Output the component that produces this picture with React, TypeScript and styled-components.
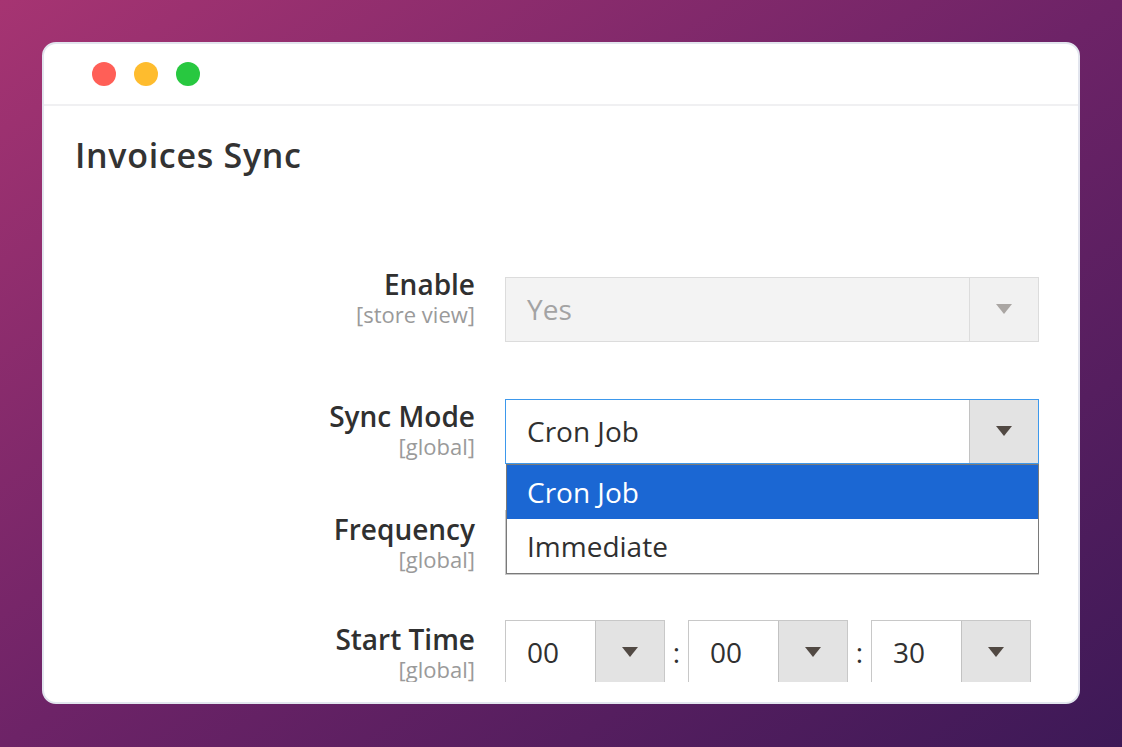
import React from 'react'
import styled, { createGlobalStyle } from 'styled-components'

type SelectState = 'disabled' | 'focus' | 'normal'

const GlobalStyle = createGlobalStyle`
  html, body {
    margin: 0;
    padding: 0;
  }
  body {
    width: 1122px;
    height: 747px;
    overflow: hidden;
    background: linear-gradient(to bottom right, #a63472 0%, #6d2367 50%, #3d1957 100%);
    font-family: 'Open Sans', 'Liberation Sans', sans-serif;
  }
`

const Page = styled.div`
  padding: 42px;
`

const Window = styled.div`
  width: 1038px;
  height: 662px;
  box-sizing: border-box;
  border: 2px solid #e2e5ee;
  border-radius: 14px;
  background: #fff;
  display: flex;
  flex-direction: column;
  overflow: hidden;
`

const TitleBar = styled.div`
  height: 60px;
  flex: none;
  display: flex;
  align-items: center;
  gap: 18px;
  padding-left: 48px;
  border-bottom: 2px solid #f0f0f2;
`

const Dot = styled.span<{ $color: string }>`
  width: 24px;
  height: 24px;
  border-radius: 50%;
  background: ${(p) => p.$color};
`

const Content = styled.div`
  flex: 1;
  min-height: 0;
  overflow: hidden;
  margin-bottom: 20px;
  padding-left: 29px;
`

const Title = styled.h1`
  margin: 29px 0 0 2px;
  font-size: 34px;
  line-height: 1.2;
  font-weight: 600;
  letter-spacing: 0.7px;
  color: #333;
`

const Form = styled.div`
  margin-top: 89px;
`

const Row = styled.div<{ $space: number }>`
  display: grid;
  grid-template-columns: 402px 534px;
  column-gap: 30px;
  align-items: start;
  margin-bottom: ${(p) => p.$space}px;
`

const LabelCell = styled.div`
  text-align: right;
  padding-top: 3px;
`

const Label = styled.div`
  font-size: 28px;
  line-height: 1.2;
  font-weight: 600;
  color: #303030;
`

const Scope = styled.div`
  font-size: 22px;
  line-height: 1.2;
  color: #9a9a9a;
`

const Control = styled.div<{ $offset: number }>`
  position: relative;
  margin-top: ${(p) => p.$offset}px;
`

const SelectBox = styled.div<{ $state: SelectState; $width?: number }>`
  box-sizing: border-box;
  width: ${(p) => (p.$width ? `${p.$width}px` : '100%')};
  height: 65px;
  display: flex;
  border: 1px solid
    ${(p) => (p.$state === 'focus' ? '#3d98ec' : p.$state === 'disabled' ? '#dcdcdc' : '#c8c8c8')};
  background: ${(p) => (p.$state === 'disabled' ? '#f3f3f3' : '#fff')};
`

const Value = styled.div<{ $muted?: boolean }>`
  flex: 1;
  display: flex;
  align-items: center;
  padding-left: 21px;
  font-size: 28px;
  color: ${(p) => (p.$muted ? '#a3a3a3' : '#303030')};
`

const ArrowCell = styled.div<{ $muted?: boolean }>`
  width: 68px;
  flex: none;
  display: flex;
  align-items: center;
  justify-content: center;
  border-left: 1px solid ${(p) => (p.$muted ? '#dcdcdc' : '#c2c2c2')};
  background: ${(p) => (p.$muted ? '#f1f1f1' : '#e3e3e3')};
`

const Caret = styled.span<{ $muted?: boolean }>`
  width: 0;
  height: 0;
  border-left: 8px solid transparent;
  border-right: 8px solid transparent;
  border-top: 10px solid ${(p) => (p.$muted ? '#aaa6a3' : '#514943')};
`

const Menu = styled.div`
  position: absolute;
  top: 100%;
  left: 1px;
  right: 0;
  z-index: 2;
  border: 1px solid #7a7a7a;
  background: #fff;
`

const Option = styled.div<{ $active?: boolean }>`
  height: 54px;
  display: flex;
  align-items: center;
  padding-left: 20px;
  font-size: 28px;
  background: ${(p) => (p.$active ? '#1b67d3' : '#fff')};
  color: ${(p) => (p.$active ? '#fff' : '#303030')};
`

const TimeRow = styled.div`
  display: flex;
  align-items: flex-start;
`

const Colon = styled.span`
  width: 23px;
  flex: none;
  text-align: center;
  font-size: 28px;
  line-height: 65px;
  color: #303030;
`

const Select = ({
  value,
  state = 'normal',
  width,
}: {
  value: string
  state?: SelectState
  width?: number
}) => {
  const muted = state === 'disabled'
  return (
    <SelectBox $state={state} $width={width}>
      <Value $muted={muted}>{value}</Value>
      <ArrowCell $muted={muted}>
        <Caret $muted={muted} />
      </ArrowCell>
    </SelectBox>
  )
}

const Field = ({ label, scope }: { label: string; scope: string }) => (
  <LabelCell>
    <Label>{label}</Label>
    <Scope>[{scope}]</Scope>
  </LabelCell>
)

const App = () => {
  return (
    <Page>
      <GlobalStyle />
      <Window>
        <TitleBar>
          <Dot $color="#ff5f57" />
          <Dot $color="#febc2e" />
          <Dot $color="#28c840" />
        </TitleBar>
        <Content>
          <Title>Invoices Sync</Title>
          <Form>
            <Row $space={55}>
              <Field label="Enable" scope="store view" />
              <Control $offset={12}>
                <Select value="Yes" state="disabled" />
              </Control>
            </Row>
            <Row $space={46}>
              <Field label="Sync Mode" scope="global" />
              <Control $offset={2}>
                <Select value="Cron Job" state="focus" />
                <Menu>
                  <Option $active>Cron Job</Option>
                  <Option>Immediate</Option>
                </Menu>
              </Control>
            </Row>
            <Row $space={45}>
              <Field label="Frequency" scope="global" />
              <Control $offset={0}>
                <Select value="Daily" />
              </Control>
            </Row>
            <Row $space={0}>
              <Field label="Start Time" scope="global" />
              <Control $offset={0}>
                <TimeRow>
                  <Select value="00" width={160} />
                  <Colon>:</Colon>
                  <Select value="00" width={160} />
                  <Colon>:</Colon>
                  <Select value="30" width={160} />
                </TimeRow>
              </Control>
            </Row>
          </Form>
        </Content>
      </Window>
    </Page>
  )
}

export default App
